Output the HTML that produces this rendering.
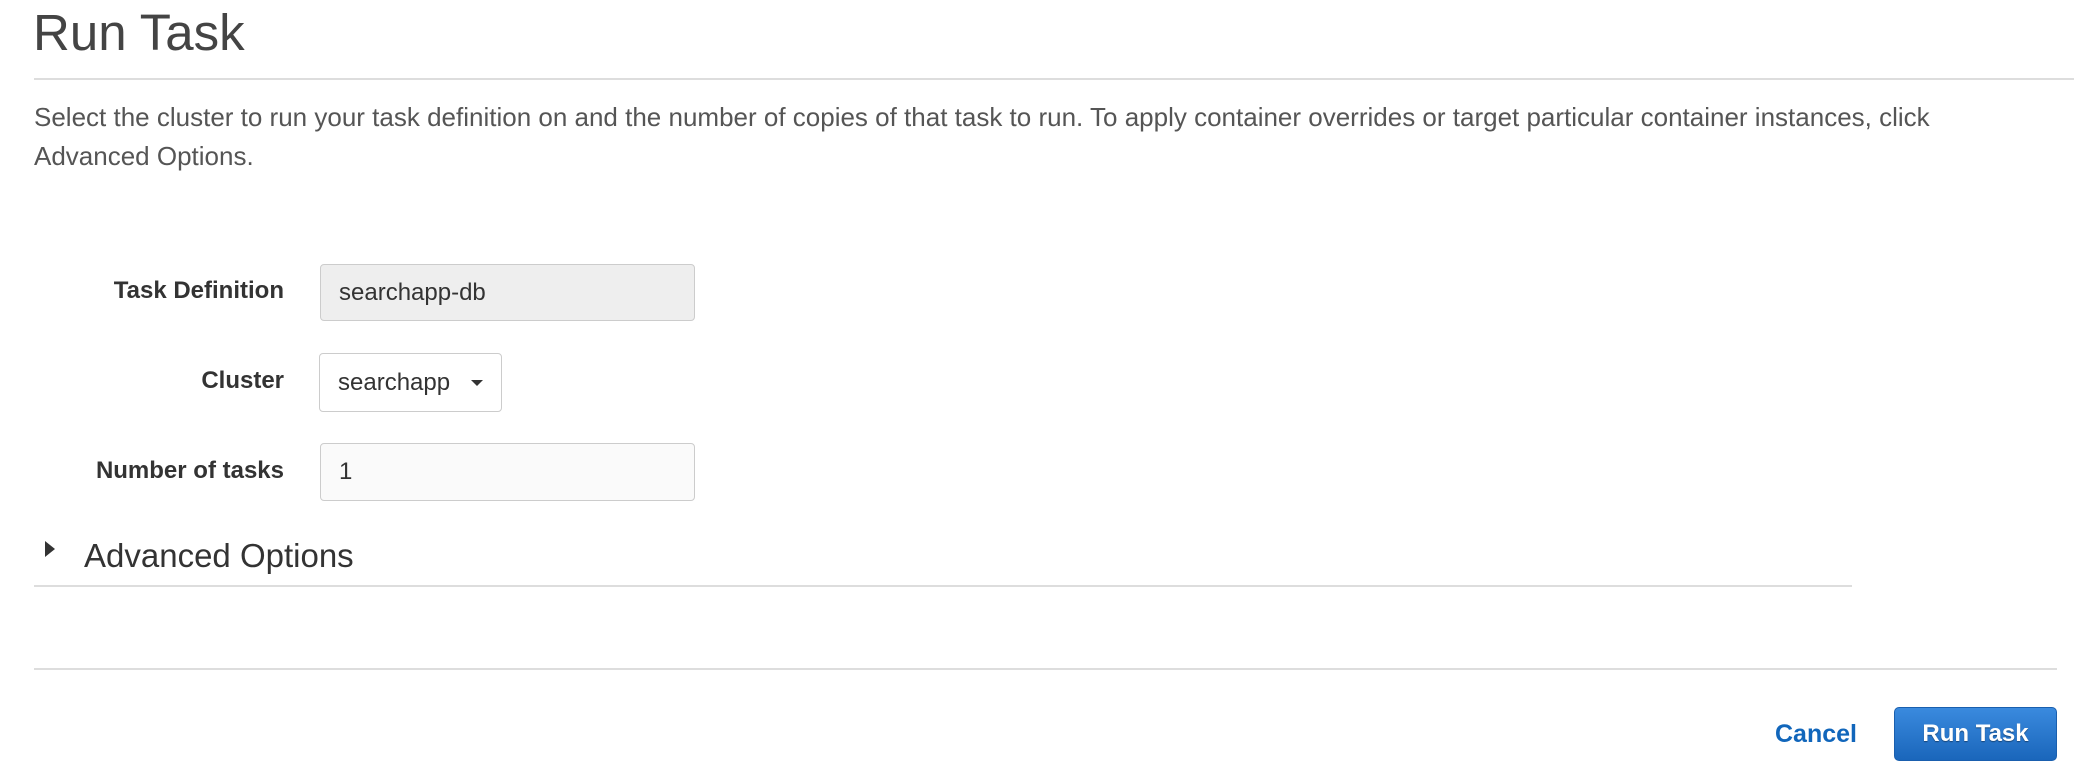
<!DOCTYPE html>
<html><head><meta charset="utf-8"><style>
body{margin:0;width:2074px;height:784px;background:#fff;font-family:"Liberation Sans",Arial,sans-serif;color:#444;position:relative;overflow:hidden}
.a{position:absolute;white-space:nowrap}
h1{position:absolute;left:33px;top:3px;margin:0;font-weight:normal;font-size:51px;color:#444;line-height:60px}
.hr{position:absolute;height:2px;background:#ddd}
p{position:absolute;left:34px;top:98px;margin:0;font-size:26px;line-height:39px;color:#555;width:1935px}
.lbl{position:absolute;right:1790px;font-weight:bold;font-size:24px;color:#333}
.box{position:absolute;border:1px solid #ccc;border-radius:4px;box-sizing:border-box;font-size:24px;color:#333;padding-left:18px}
</style></head><body>
<h1>Run Task</h1>
<div class="hr" style="left:34px;top:78px;width:2040px"></div>
<p>Select the cluster to run your task definition on and the number of copies of that task to run. To apply container overrides or target particular container instances, click Advanced Options.</p>

<div class="lbl" style="top:277px">Task Definition</div>
<div class="box" style="left:320px;top:264px;width:375px;height:57px;background:#eee;line-height:55px">searchapp-db</div>

<div class="lbl" style="top:367px">Cluster</div>
<div class="box" style="left:319px;top:353px;width:183px;height:59px;background:#fff;line-height:57px">searchapp<span style="position:absolute;left:151px;top:26px;width:0;height:0;border-left:6px solid transparent;border-right:6px solid transparent;border-top:6px solid #333"></span></div>

<div class="lbl" style="top:457px">Number of tasks</div>
<div class="box" style="left:320px;top:443px;width:375px;height:58px;background:#fafafa;line-height:56px">1</div>

<div class="a" style="left:45px;top:541px;width:0;height:0;border-top:8px solid transparent;border-bottom:8px solid transparent;border-left:10px solid #333"></div>
<div class="a" style="left:84px;top:537px;font-size:33px;color:#333">Advanced Options</div>
<div class="hr" style="left:34px;top:585px;width:1818px"></div>

<div class="hr" style="left:34px;top:668px;width:2023px"></div>
<div class="a" style="left:1775px;top:720px;font-size:25px;font-weight:bold;color:#1166bb">Cancel</div>
<div class="a" style="left:1894px;top:707px;width:163px;height:54px;border-radius:5px;background:linear-gradient(#3a8ade,#1a66bb);border:1px solid #1a5fae;box-sizing:border-box;color:#fff;font-weight:bold;font-size:24px;text-align:center;line-height:52px;text-shadow:0 1px 1px rgba(0,0,0,.4)">Run Task</div>
</body></html>
